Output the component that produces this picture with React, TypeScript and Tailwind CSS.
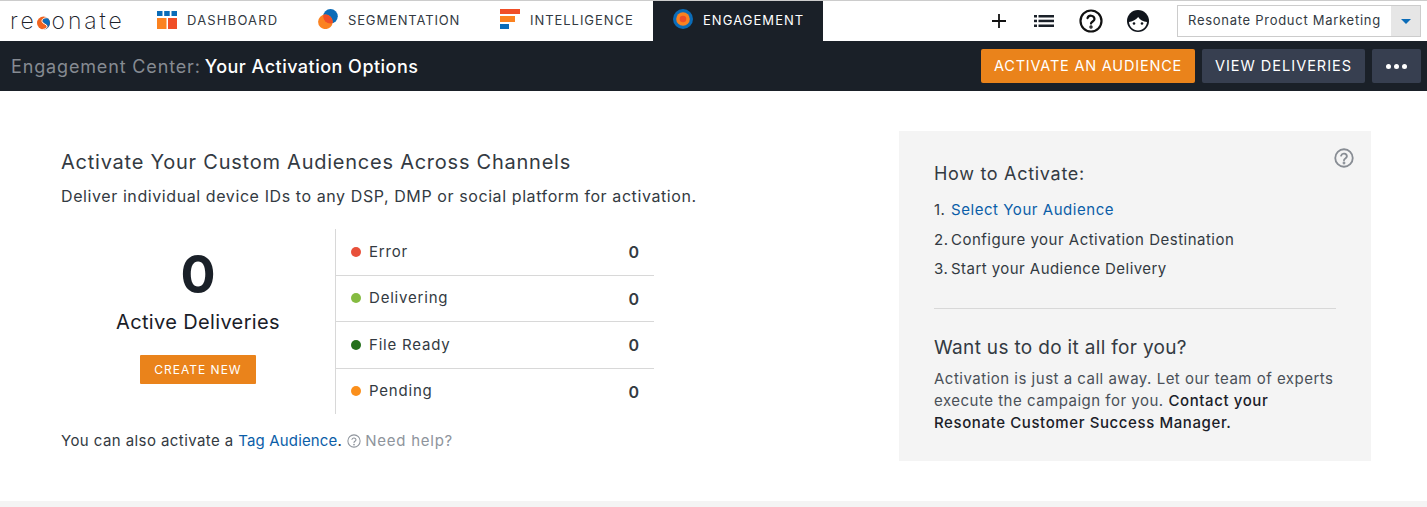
import React from "react";

const font = { fontFamily: "Inter, 'Open Sans', sans-serif" };

function DashIcon() {
  return (
    <svg width="20" height="18" viewBox="0 0 20 18" className="mb-[3px]">
      <rect x="0" y="0" width="5.5" height="5" fill="#0b6cb8" />
      <rect x="7.2" y="0" width="5.5" height="5" fill="#0b6cb8" />
      <rect x="14.5" y="0" width="5.5" height="5" fill="#0b6cb8" />
      <rect x="0" y="7" width="9.5" height="11" fill="#fb8220" />
      <rect x="11" y="7" width="9" height="11" fill="#f04e27" />
    </svg>
  );
}
function SegIcon() {
  return (
    <svg width="20" height="20" viewBox="0 0 20 20" className="mb-[4px]">
      <defs>
        <clipPath id="segclip"><circle cx="12.500" cy="7.300" r="7.300" /></clipPath>
      </defs>
      <circle cx="12.500" cy="7.300" r="7.300" fill="#0b6cb8" />
      <circle cx="7.400" cy="12.800" r="7.300" fill="#fb8220" />
      <circle cx="7.400" cy="12.800" r="7.300" fill="#f04e27" clipPath="url(#segclip)" />
    </svg>
  );
}
function IntelIcon() {
  return (
    <svg width="20" height="20" viewBox="0 0 20 20" className="mb-[4px]">
      <rect x="0" y="0" width="20" height="5" fill="#f04e27" />
      <rect x="0" y="7" width="15" height="6" fill="#fb8220" />
      <rect x="0" y="15" width="9" height="5" fill="#0b6cb8" />
    </svg>
  );
}
function EngIcon() {
  return (
    <svg width="20" height="20" viewBox="0 0 20 20" className="mb-[4px]">
      <circle cx="10" cy="10" r="10" fill="#0b6cb8" />
      <circle cx="10" cy="10" r="6.800" fill="#fb8220" />
      <circle cx="10" cy="10" r="3.300" fill="#f04e27" />
    </svg>
  );
}
function FaceIcon() {
  return (
    <svg width="24" height="24" viewBox="0 0 24 24">
      <circle cx="12" cy="12" r="11" fill="#10151c" />
      <path d="M3 13c2.800-.4 7-1.800 9.200-5 1.800 3 5 4.800 8.800 5-.4 4.800-4.200 8.500-9 8.500S3.300 17.800 3 13z" fill="#fff" />
      <circle cx="8" cy="14.500" r="1.300" fill="#10151c" />
      <circle cx="16" cy="14.500" r="1.300" fill="#10151c" />
    </svg>
  );
}
function Help({ size, color, sw }: { size: number; color: string; sw: number }) {
  return (
    <svg width={size} height={size} viewBox="0 0 24 24" fill="none" stroke={color} strokeWidth={sw} strokeLinecap="round">
      <circle cx="12" cy="12" r="10.500" />
      <path d="M8.500 9.200a3.600 3.600 0 0 1 7 .8c0 2.300-3.500 2.600-3.500 4.600" />
      <circle cx="12" cy="18" r="0.600" fill={color} />
    </svg>
  );
}

function Row({ color, label, h, last }: { color: string; label: string; h: string; last?: boolean }) {
  return (
    <div className={`flex items-center ${h} pl-[15px] pr-[15px] ${last ? "" : "border-b border-[#d8d8d8]"}`}>
      <span className="w-[10px] h-[10px] rounded-full mr-[8px] mb-[1px]" style={{ backgroundColor: color }} />
      <span className="text-[15px] tracking-[0.8px] text-[#333a42] flex-1">{label}</span>
      <span className="text-[16px] font-semibold text-[#333a42]">0</span>
    </div>
  );
}

export default function App() {
  return (
    <div className="w-[1427px] h-[507px] bg-white overflow-hidden flex flex-col" style={font}>
      <header className="h-[41px] border-t border-[#cccccc] flex items-stretch">
        <div className="w-[157px] pl-[10px] flex items-center text-[23px] font-extralight tracking-[2.9px] text-[#1a2028] leading-none">
          <span>re</span>
          <svg width="13" height="14" viewBox="0 0 13 14" className="mr-[2px] mt-[3px]">
            <circle cx="6.500" cy="7" r="6.500" fill="#f0641f" />
            <path d="M10.800 2.200C8 1.500 5.200 3 5.500 5.300c.3 2.200 5 2.600 5 4.900 0 1.700-2 3-4.500 3.300 3.500.3 7-2.700 7-6.500 0-2-.9-3.600-2.200-4.800z" fill="#0b6cb8" />
            <path d="M10.800 1.800C7.500 1.300 4.500 3 5 5.500s5 2.500 5 4.800c0 1.700-2 3-4.500 3.200" fill="none" stroke="#fff" strokeWidth="1" />
          </svg>
          <span>onate</span>
        </div>
        <a className="w-[161px] flex items-center gap-[10px] text-[13px] tracking-[1.2px] text-[#333a42]">
          <DashIcon />DASHBOARD
        </a>
        <a className="w-[182px] flex items-center gap-[10px] text-[13px] tracking-[0.85px] text-[#333a42]">
          <SegIcon />SEGMENTATION
        </a>
        <a className="w-[153px] flex items-center gap-[10px] text-[13px] tracking-[0.95px] text-[#333a42]">
          <IntelIcon />INTELLIGENCE
        </a>
        <a className="w-[170px] pl-[20px] bg-[#1a2028] flex items-center gap-[10px] text-[13px] tracking-[1.05px] text-white">
          <EngIcon />ENGAGEMENT
        </a>
        <div className="flex-1 flex items-center justify-end pr-[6px]">
          <svg width="16" height="16" viewBox="0 0 16 16" className="mr-[27px]" stroke="#111" strokeWidth="1.800">
            <path d="M8 1v14M1 8h14" />
          </svg>
          <svg width="20" height="12" viewBox="0 0 20 12" className="mr-[25px]" fill="#1a2028">
            <rect x="0" y="0" width="3" height="2.500" /><rect x="4.500" y="0" width="15.500" height="2.500" />
            <rect x="0" y="4.700" width="3" height="2.500" /><rect x="4.500" y="4.700" width="15.500" height="2.500" />
            <rect x="0" y="9.500" width="3" height="2.500" /><rect x="4.500" y="9.500" width="15.500" height="2.500" />
          </svg>
          <span className="mr-[23px] flex"><Help size={24} color="#111" sw={2.200} /></span>
          <span className="mr-[27px] flex"><FaceIcon /></span>
          <div className="w-[244px] h-[32px] border border-[#cccccc] flex items-stretch">
            <span className="flex-1 pl-[10px] flex items-center text-[13px] tracking-[0.72px] text-[#333a42]">Resonate Product Marketing</span>
            <span className="w-[29px] bg-[#e6e6e6] flex items-center justify-center">
              <span className="w-0 h-0 border-l-[5px] border-r-[5px] border-t-[5px] border-l-transparent border-r-transparent border-t-[#0b6cb8]" />
            </span>
          </div>
        </div>
      </header>

      <div className="h-[50px] bg-[#1a2028] flex items-center pl-[11px] pr-[6px]">
        <div className="flex-1 text-[18px] font-medium flex">
          <span className="text-[#868b92] font-normal tracking-[0.85px] mr-[4px]">Engagement Center:</span>
          <span className="text-white tracking-[0.48px]">Your Activation Options</span>
        </div>
        <button className="h-[34px] w-[214px] bg-[#ea831b] rounded-[2px] text-white text-[14.500px] tracking-[0.8px] mr-[7px]">ACTIVATE AN AUDIENCE</button>
        <button className="h-[34px] w-[163px] bg-[#373f50] rounded-[2px] text-white text-[14.500px] tracking-[1px] mr-[7px]">VIEW DELIVERIES</button>
        <button className="h-[34px] w-[49px] bg-[#373f50] rounded-[2px] flex items-center justify-center gap-[3px]">
          <span className="w-[5px] h-[5px] rounded-full bg-white" />
          <span className="w-[5px] h-[5px] rounded-full bg-white" />
          <span className="w-[5px] h-[5px] rounded-full bg-white" />
        </button>
      </div>

      <main className="flex-1 flex pt-[40px] pl-[61px] pr-[56px]">
        <section className="flex-1">
          <h1 className="text-[20px] leading-[24px] mt-[19px] text-[#333a42] tracking-[0.76px]">Activate Your Custom Audiences Across Channels</h1>
          <p className="text-[16px] leading-[24px] mt-[10px] text-[#333a42] tracking-[0.59px]">Deliver individual device IDs to any DSP, DMP or social platform for activation.</p>
          <div className="flex mt-[21px]">
            <div className="w-[274px] flex flex-col items-center">
              <div className="text-[52px] leading-[52px] mt-[20px] font-bold text-[#1a2028]">0</div>
              <div className="text-[20px] leading-[24px] mt-[9px] text-[#1a2028] tracking-[0.35px]">Active Deliveries</div>
              <button className="mt-[21px] w-[116px] h-[29px] bg-[#ea831b] rounded-[1px] text-white text-[12px] tracking-[1px]">CREATE NEW</button>
            </div>
            <div className="w-[319px] h-[185px] border-l border-[#d8d8d8]">
              <Row color="#e8503a" label="Error" h="h-[47px]" />
              <Row color="#85bb41" label="Delivering" h="h-[46px]" />
              <Row color="#24701a" label="File Ready" h="h-[47px]" />
              <Row color="#fb8f1b" label="Pending" h="h-[45px]" last />
            </div>
          </div>
          <p className="mt-[15px] text-[15px] leading-[24px] text-[#333a42] flex items-center tracking-[0.42px]">
            <span>You can also activate a&nbsp;</span>
            <span className="text-[#0b5ea8] tracking-[0.15px]">Tag Audience</span>
            <span>.</span>
            <span className="ml-[5px] mr-[4px] flex"><Help size={14} color="#8e949c" sw={1.800} /></span>
            <span className="text-[#8e949c] tracking-[0.75px]">Need help?</span>
          </p>
        </section>

        <aside className="relative w-[472px] h-[330px] bg-[#f4f4f4] pt-[31px] px-[35px]">
          <span className="absolute right-[17px] top-[17px] flex"><Help size={20} color="#888d94" sw={2.200} /></span>
          <h2 className="text-[18px] leading-[24px] text-[#333a42] tracking-[0.7px]">How to Activate:</h2>
          <ol className="mt-[9px] text-[15px] text-[#333a42] tracking-[0.5px]">
            <li className="h-[29.500px] leading-[30px] flex"><span className="w-[17px]">1.</span><span className="text-[#0b5ea8] tracking-[0.55px]">Select Your Audience</span></li>
            <li className="h-[29.500px] leading-[29px] flex"><span className="w-[17px]">2.</span><span>Configure your Activation Destination</span></li>
            <li className="h-[29px] leading-[30px] flex"><span className="w-[17px]">3.</span><span className="tracking-[0.45px]">Start your Audience Delivery</span></li>
          </ol>
          <hr className="mt-[25px] border-[#d8d8d8]" />
          <h2 className="mt-[26px] text-[19px] leading-[26px] text-[#333a42] tracking-[0.33px]">Want us to do it all for you?</h2>
          <p className="mt-[7px] text-[15px] leading-[22px] text-[#4a5058] tracking-[0.5px]">
            Activation is just a call away. Let our team of experts execute the campaign for you. <span className="font-medium text-[#1a2028] tracking-[0.6px]">Contact your Resonate Customer Success Manager.</span>
          </p>
        </aside>
      </main>
      <div className="h-[6px] bg-[#f4f4f4]" />
    </div>
  );
}
